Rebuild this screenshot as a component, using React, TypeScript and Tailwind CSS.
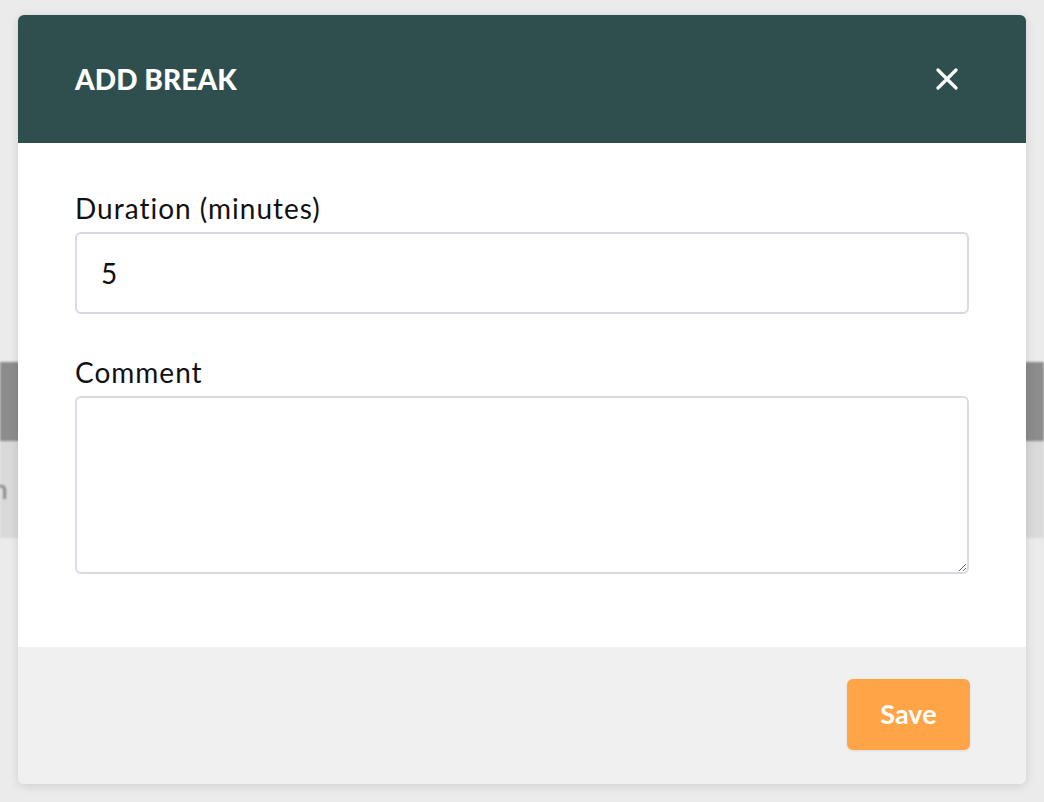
import React from "react";

const font = { fontFamily: "Lato, 'Open Sans', sans-serif" };

const CloseIcon = () => (
  <svg width="22" height="22" viewBox="0 0 22 22" fill="none" stroke="white" strokeWidth={3.2} strokeLinecap="round">
    <path d="M2 2L20 20M20 2L2 20" />
  </svg>
);

export default function App() {
  return (
    <div className="relative w-[1044px] h-[802px] overflow-hidden bg-[#ebebeb]" style={font}>
      {/* page behind the overlay */}
      <div className="flex flex-col pt-[362px] blur-[1px]">
        <div className="h-[79px] bg-[#8c8c8c]" />
        <div className="h-[97px] bg-[#d9d9d9] flex items-center">
          <span className="-ml-[7px] text-[26px] text-[#7a7a7a]">h</span>
        </div>
      </div>

      {/* modal */}
      <div className="absolute left-[18px] top-[15px] w-[1008px] h-[769px] rounded-[6px] overflow-hidden flex flex-col shadow-[0_2px_10px_rgba(0,0,0,0.12)]">
        <div className="h-[128px] shrink-0 bg-[#2f4f4f] flex items-center justify-between pl-[57px] pr-[68px]">
          <h2 className="text-white font-black text-[28px] tracking-[0.1px] uppercase leading-none">Add Break</h2>
          <button className="flex items-center justify-center">
            <CloseIcon />
          </button>
        </div>

        <div className="flex-1 bg-white px-[57px] pt-[45px] flex flex-col">
          <label className="h-[40px] leading-[40px] text-[28px] tracking-[1px] text-[#111] mb-[4px]">Duration (minutes)</label>
          <input
            type="text"
            defaultValue="5"
            className="h-[82px] w-full rounded-[6px] border-2 border-[#d9d9e1] px-[24px] text-[28px] text-[#111] outline-none"
          />
          <label className="mt-[38px] h-[40px] leading-[40px] text-[28px] tracking-[1px] text-[#111] mb-[4px]">Comment</label>
          <textarea className="h-[178px] w-full rounded-[6px] border-2 border-[#d9d9e1] px-[24px] py-[16px] text-[28px] outline-none" />
        </div>

        <div className="h-[137px] shrink-0 bg-[#f0f0f0] flex items-start justify-end pt-[32px] pr-[56px]">
          <button className="w-[123px] h-[71px] rounded-[6px] bg-[#ffa447] text-white font-bold text-[27px] shadow-[0_1px_3px_rgba(0,0,0,0.08)]">
            Save
          </button>
        </div>
      </div>
    </div>
  );
}
